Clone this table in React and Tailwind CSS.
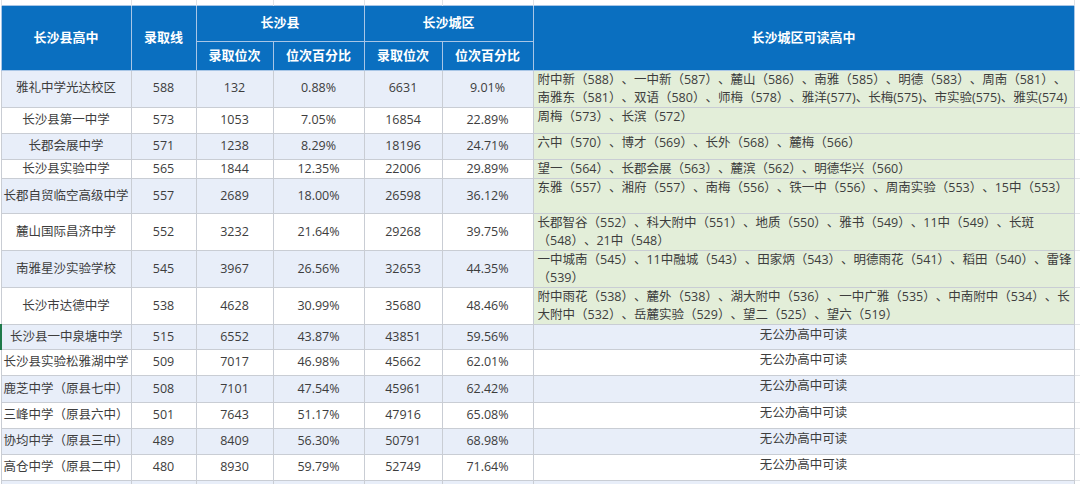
import React from 'react';

// 长沙县高中 录取线 / 位次对照表
const rows = [
  { name: '雅礼中学光达校区', line: '588', rank: '132', pct: '0.88%', cityRank: '6631', cityPct: '9.01%', h: 'h-[36px]', city: ['附中新（588）、一中新（587）、麓山（586）、南雅（585）、明德（583）、周南（581）、', '南雅东（581）、双语（580）、师梅（578）、雅洋(577)、长梅(575)、市实验(575)、雅实(574)'] },
  { name: '长沙县第一中学', line: '573', rank: '1053', pct: '7.05%', cityRank: '16854', cityPct: '22.89%', h: 'h-[26px]', city: ['周梅（573）、长滨（572）'] },
  { name: '长郡会展中学', line: '571', rank: '1238', pct: '8.29%', cityRank: '18196', cityPct: '24.71%', h: 'h-[26px]', city: ['六中（570）、博才（569）、长外（568）、麓梅（566）'] },
  { name: '长沙县实验中学', line: '565', rank: '1844', pct: '12.35%', cityRank: '22006', cityPct: '29.89%', h: 'h-[19px]', city: ['望一（564）、长郡会展（563）、麓滨（562）、明德华兴（560）'] },
  { name: '长郡自贸临空高级中学', line: '557', rank: '2689', pct: '18.00%', cityRank: '26598', cityPct: '36.12%', h: 'h-[35px]', city: ['东雅（557）、湘府（557）、南梅（556）、铁一中（556）、周南实验（553）、15中（553）'] },
  { name: '麓山国际昌济中学', line: '552', rank: '3232', pct: '21.64%', cityRank: '29268', cityPct: '39.75%', h: 'h-[37px]', city: ['长郡智谷（552）、科大附中（551）、地质（550）、雅书（549）、11中（549）、长斑', '（548）、21中（548）'] },
  { name: '南雅星沙实验学校', line: '545', rank: '3967', pct: '26.56%', cityRank: '32653', cityPct: '44.35%', h: 'h-[36px]', city: ['一中城南（545）、11中融城（543）、田家炳（543）、明德雨花（541）、稻田（540）、雷锋', '（539）'] },
  { name: '长沙市达德中学', line: '538', rank: '4628', pct: '30.99%', cityRank: '35680', cityPct: '48.46%', h: 'h-[37px]', city: ['附中雨花（538）、麓外（538）、湖大附中（536）、一中广雅（535）、中南附中（534）、长', '大附中（532）、岳麓实验（529）、望二（525）、望六（519）'] },
  { name: '长沙县一中泉塘中学', line: '515', rank: '6552', pct: '43.87%', cityRank: '43851', cityPct: '59.56%', h: 'h-[25px]', city: null, marked: true },
  { name: '长沙县实验松雅湖中学', line: '509', rank: '7017', pct: '46.98%', cityRank: '45662', cityPct: '62.01%', h: 'h-[26px]', city: null },
  { name: '鹿芝中学（原县七中）', line: '508', rank: '7101', pct: '47.54%', cityRank: '45961', cityPct: '62.42%', h: 'h-[27px]', city: null },
  { name: '三峰中学（原县六中）', line: '501', rank: '7643', pct: '51.17%', cityRank: '47916', cityPct: '65.08%', h: 'h-[26px]', city: null },
  { name: '协均中学（原县三中）', line: '489', rank: '8409', pct: '56.30%', cityRank: '50791', cityPct: '68.98%', h: 'h-[26px]', city: null },
  { name: '高仓中学（原县二中）', line: '480', rank: '8930', pct: '59.79%', cityRank: '52749', cityPct: '71.64%', h: 'h-[26px]', city: null },
];

const head = 'bg-[#0a6fc0] text-white font-bold text-[13px] text-center align-middle border border-[#a9c6e6]';
const cell = 'border border-[#c9cdd4] text-center align-middle whitespace-nowrap p-0';

export default function App() {
  return (
    <div className="w-[1080px] h-[484px] overflow-hidden bg-white font-['Open_Sans','Noto_Sans_CJK_SC',sans-serif] text-[12.5px] text-[#3d3d3d] [text-spacing-trim:space-all]">
      <table className="table-fixed border-collapse w-[1080px]">
        <colgroup>
          <col className="w-[130px]" />
          <col className="w-[65px]" />
          <col className="w-[77px]" />
          <col className="w-[91px]" />
          <col className="w-[78px]" />
          <col className="w-[91px]" />
          <col className="w-[541px]" />
          <col className="w-[7px]" />
        </colgroup>
        <tbody>
          {/* cut-off row above the header */}
          <tr className="h-[5px]">
            {Array.from({ length: 8 }).map((_, i) => (
              <td key={i} className="border-x border-[#dfe2e6] p-0" />
            ))}
          </tr>

          <tr className="h-[36px]">
            <td rowSpan={2} className={head}>长沙县高中</td>
            <td rowSpan={2} className={head}>录取线</td>
            <td colSpan={2} className={head}>长沙县</td>
            <td colSpan={2} className={head}>长沙城区</td>
            <td rowSpan={2} className={head}>长沙城区可读高中</td>
            <td rowSpan={2} className="border-b border-[#e3e5e8] bg-white" />
          </tr>
          <tr className="h-[29px]">
            <td className={head}>录取位次</td>
            <td className={head}>位次百分比</td>
            <td className={head}>录取位次</td>
            <td className={head}>位次百分比</td>
          </tr>

          {rows.map((r, i) => {
            const bg = i % 2 === 0 ? 'bg-[#e8eef9]' : 'bg-white';
            return (
              <tr key={r.name} className={r.h}>
                <td className={`${cell} ${bg} ${r.marked ? 'border-l-2 border-l-[#1f7a4a]' : ''}`}>{r.name}</td>
                <td className={`${cell} ${bg}`}>{r.line}</td>
                <td className={`${cell} ${bg}`}>{r.rank}</td>
                <td className={`${cell} ${bg}`}>{r.pct}</td>
                <td className={`${cell} ${bg}`}>{r.cityRank}</td>
                <td className={`${cell} ${bg}`}>{r.cityPct}</td>
                {r.city ? (
                  <td className="border border-[#c9cdd4] bg-[#e3eed9] align-top px-[4px] py-0 leading-[18px] overflow-hidden">
                    {r.city.map((l) => (
                      <div key={l} className="whitespace-nowrap">{l}</div>
                    ))}
                  </td>
                ) : (
                  <td className={`border border-[#c9cdd4] ${bg} align-top text-center leading-[19px] p-0`}>无公办高中可读</td>
                )}
                <td className="border-b border-[#e3e5e8] bg-white" />
              </tr>
            );
          })}

          <tr className="h-[12px]">
            {Array.from({ length: 7 }).map((_, i) => (
              <td key={i} className="border border-[#c9cdd4] bg-[#e8eef9] p-0" />
            ))}
            <td className="p-0" />
          </tr>
        </tbody>
      </table>
    </div>
  );
}
